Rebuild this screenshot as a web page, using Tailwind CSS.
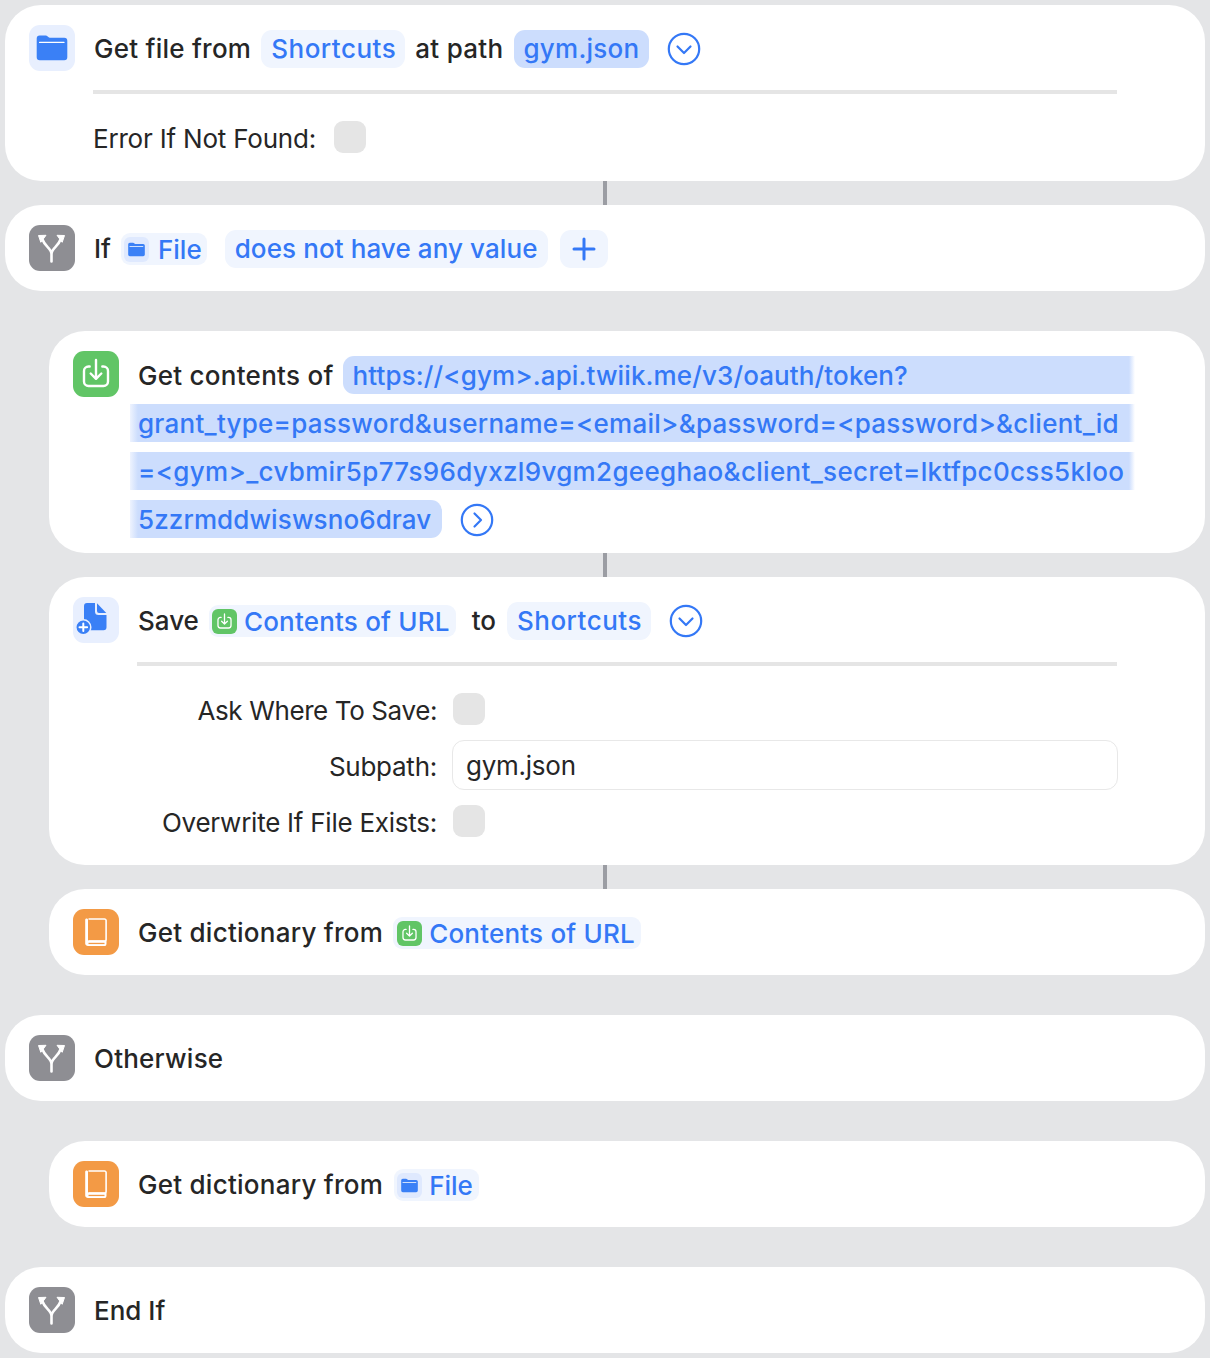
<!DOCTYPE html>
<html lang="en">

<head>
  <meta charset="UTF-8">
  <meta name="viewport" content="width=device-width, initial-scale=1.0">
  <title>Shortcut actions</title>
  <script src="https://cdn.jsdelivr.net/npm/@tailwindcss/browser@4"></script>
</head>

<body class="bg-[#e4e5e7] font-['Inter','Liberation_Sans',sans-serif] text-[26px] text-[#262626] leading-[32px] overflow-hidden">
  <!-- icon sprites -->
  <svg class="hidden">
    <symbol id="folder" viewBox="0 0 46 46">
      <path d="M7.700 13.500a3 3 0 0 1 3-3h6c1.500 0 2.500 2.200 4 2.200h14.600a3 3 0 0 1 3 3V32.300a3 3 0 0 1-3 3H10.700a3 3 0 0 1-3-3z" fill="#3a80f6" />
      <rect x="10" y="16.700" width="25.600" height="1.300" rx=".6" fill="#fff" />
    </symbol>
    <symbol id="branch" viewBox="0 0 46 46">
      <path d="M22.500 36.500V29C22.500 23 16 22 13.500 14.500M22.500 29C22.500 23 29 22 31.500 14.500" fill="none" stroke="#fff" stroke-width="2.600" stroke-linecap="round" />
      <path d="M9.500 10.500l7.500-.2-5.200 7zM35.500 10.500l-7.500-.2 5.200 7z" fill="#fff" stroke="#fff" stroke-width="1" stroke-linejoin="round" />
    </symbol>
    <symbol id="download" viewBox="0 0 46 46">
      <path d="M16.700 15.500H15.500a4.500 4.500 0 0 0-4.500 4.500v10.500a4.500 4.500 0 0 0 4.500 4.500h15a4.500 4.500 0 0 0 4.500-4.500V20a4.500 4.500 0 0 0-4.500-4.500h-1.200" fill="none" stroke="#fff" stroke-width="2.400" stroke-linecap="round" />
      <path d="M23 9v18.500M17.700 22.500l5.300 5.300 5.300-5.300" fill="none" stroke="#fff" stroke-width="2.400" stroke-linecap="round" stroke-linejoin="round" />
    </symbol>
    <symbol id="book" viewBox="0 0 46 46">
      <path d="M15.500 10H31.500a1.600 1.600 0 0 1 1.600 1.600V30.500a1.600 1.600 0 0 1-1.600 1.600H15.500" fill="none" stroke="#fff" stroke-width="1.600" />
      <path d="M13.500 9.500c1 0 1.500 .5 1.500 1.500v20.500h18.500v3c0 1-.5 2.500-1.500 2.500H15c-1.500 0-2.800-1-2.800-2.500V11c0-1 .5-1.500 1.300-1.500z" fill="#fff" />
      <path d="M15.500 33.800h16v1.300h-16z" fill="#f39a45" />
    </symbol>
    <symbol id="savefile" viewBox="0 0 46 46">
      <path d="M11 9a3 3 0 0 1 3-3h8v8.500a3.500 3.500 0 0 0 3.500 3.500h8v12.300a3 3 0 0 1-3 3H14a3 3 0 0 1-3-3z" fill="#3a80f6" />
      <path d="M24 6.300l9.300 9.700H26a2 2 0 0 1-2-2z" fill="#3a80f6" />
      <circle cx="10.300" cy="30.300" r="7.500" fill="#3a80f6" stroke="#e8effe" stroke-width="1.500" />
      <path d="M10.300 26.500v7.600M6.500 30.300h7.600" stroke="#fff" stroke-width="2" stroke-linecap="round" />
    </symbol>
  </svg>

  <main class="pt-[5px] pl-[5px] pr-[5px] flex flex-col">
    <!-- Get file -->
    <section class="bg-white rounded-[36px] pl-6 pr-[88px] pt-5 pb-7">
      <div class="flex items-center h-[46px]">
        <div class="w-[46px] h-[46px] rounded-[11px] bg-[#e8effe] shrink-0"><svg class="w-full h-full"><use href="#folder" /></svg></div>
        <span class="ml-[19px] pt-[2px] font-medium tracking-[0.25px]">Get file from</span>
        <span class="ml-[10px] mt-[2px] h-[38px] pl-[10px] pr-[9px] flex items-center rounded-[11px] bg-[#f0f5fe] text-[#3478f6] font-medium tracking-[0.5px]">Shortcuts</span>
        <span class="ml-[10px] pt-[2px] font-medium tracking-[0.3px]">at path</span>
        <span class="ml-[10px] mt-[2px] h-[38px] px-[10px] flex items-center rounded-[11px] bg-[#ccddfd] text-[#3478f6] font-medium tracking-[0.25px]">gym.json</span>
        <svg class="ml-[18px] mt-[2px] w-[34px] h-[34px]" viewBox="0 0 34 34" fill="none" stroke="#3478f6" stroke-width="2.200" stroke-linecap="round" stroke-linejoin="round"><circle cx="17" cy="17" r="15.200" /><path d="M10.500 14.500 17 21l6.500-6.500" /></svg>
      </div>
      <div class="ml-16 mt-[19px] h-1 bg-[#e5e5e5]"></div>
      <div class="ml-16 mt-[27px] flex items-center h-8">
        <span class="pt-[4px] tracking-[-0.2px]">Error If Not Found:</span>
        <span class="ml-[18px] w-8 h-8 rounded-[9px] bg-[#e5e5e5]"></span>
      </div>
    </section>
    <div class="w-1 h-6 bg-[#9b9da3] ml-[598px]"></div>

    <!-- If -->
    <section class="bg-white rounded-[36px] pl-6 pt-5 pb-5 h-[86px]">
      <div class="flex items-center h-[46px]">
        <div class="w-[46px] h-[46px] rounded-[11px] bg-[#8e8e93] shrink-0"><svg class="w-full h-full"><use href="#branch" /></svg></div>
        <span class="ml-[19px] pt-[2px] font-medium">If</span>
        <span class="ml-[10px] mt-[2px] h-8 pl-[3px] pr-[5px] flex items-center rounded-[9px] bg-[#f0f5fe] text-[#3478f6] font-medium">
          <span class="w-[25px] h-[25px] rounded-[6px] bg-[#dfe9fe]"><svg class="w-full h-full"><use href="#folder" /></svg></span>
          <span class="ml-[9px] relative top-px">File</span>
        </span>
        <span class="ml-[18px] mt-[2px] h-[38px] px-[10px] flex items-center rounded-[11px] bg-[#f0f5fe] text-[#3478f6] font-medium tracking-[0.1px]">does not have any value</span>
        <span class="ml-[12px] mt-[2px] w-12 h-[38px] flex items-center justify-center rounded-[11px] bg-[#f0f5fe]">
          <svg class="w-[24px] h-[24px]" viewBox="0 0 24 24" fill="none" stroke="#3478f6" stroke-width="3" stroke-linecap="round"><path d="M12 2v20M2 12h20" /></svg>
        </span>
      </div>
    </section>

    <!-- Get contents of URL -->
    <section class="mt-10 ml-11 bg-white rounded-[36px] pl-6 pr-[70px] pt-5 pb-[15px] flex items-start">
      <div class="w-[46px] h-[46px] rounded-[11px] bg-[#61c566] shrink-0"><svg class="w-full h-full"><use href="#download" /></svg></div>
      <div class="ml-[11px] mt-[5px] flex-1 flex flex-col gap-[10px] text-[#3478f6] font-medium">
        <div class="flex h-[38px] items-center pl-2">
          <span class="text-[#262626] pt-[2px] tracking-[0.27px]">Get contents of</span>
          <span class="ml-[9px] flex-1 h-[38px] pl-[10px] pt-[2px] tracking-[0.12px] flex items-center rounded-l-[11px] bg-[linear-gradient(90deg,#ccddfd,#ccddfd_calc(100%-6px),#ffffff)]">https://&lt;gym&gt;.api.twiik.me/v3/oauth/token?</span>
        </div>
        <div class="h-[38px] pl-2 pt-[2px] tracking-[0.26px] flex items-center bg-[linear-gradient(90deg,#eef3fe,#ccddfd_8px,#ccddfd_calc(100%-6px),#ffffff)]">grant_type=password&amp;username=&lt;email&gt;&amp;password=&lt;password&gt;&amp;client_id</div>
        <div class="h-[38px] pl-2 pt-[2px] tracking-[0.33px] flex items-center bg-[linear-gradient(90deg,#eef3fe,#ccddfd_8px,#ccddfd_calc(100%-6px),#ffffff)]">=&lt;gym&gt;_cvbmir5p77s96dyxzl9vgm2geeghao&amp;client_secret=lktfpc0css5kloo</div>
        <div class="flex items-center h-[38px]">
          <span class="h-[38px] pl-2 pr-[11px] pt-[2px] tracking-[0.1px] flex items-center rounded-r-[11px] bg-[linear-gradient(90deg,#eef3fe,#ccddfd_8px)]">5zzrmddwiswsno6drav</span>
          <svg class="ml-[18px] mt-[2px] w-[34px] h-[34px]" viewBox="0 0 34 34" fill="none" stroke="#3478f6" stroke-width="2.200" stroke-linecap="round" stroke-linejoin="round"><circle cx="17" cy="17" r="15.200" /><path d="M14.500 10.500 21 17l-6.500 6.500" /></svg>
        </div>
      </div>
    </section>
    <div class="w-1 h-6 bg-[#9b9da3] ml-[598px]"></div>

    <!-- Save file -->
    <section class="ml-11 bg-white rounded-[36px] pl-6 pr-[88px] pt-5 pb-7">
      <div class="flex items-center h-[46px]">
        <div class="w-[46px] h-[46px] rounded-[11px] bg-[#e8effe] shrink-0"><svg class="w-full h-full"><use href="#savefile" /></svg></div>
        <span class="ml-[19px] pt-[2px] font-medium">Save</span>
        <span class="ml-[10px] mt-[2px] h-8 pl-[3px] pr-[6px] flex items-center rounded-[9px] bg-[#f0f5fe] text-[#3478f6] font-medium tracking-[0.2px]">
          <span class="w-[25px] h-[25px] rounded-[6px] bg-[#61c566]"><svg class="w-full h-full"><use href="#download" /></svg></span>
          <span class="ml-[7px] relative top-px">Contents of URL</span>
        </span>
        <span class="ml-[16px] pt-[2px] font-medium">to</span>
        <span class="ml-[11px] mt-[2px] h-[38px] pl-[10px] pr-[9px] flex items-center rounded-[11px] bg-[#f0f5fe] text-[#3478f6] font-medium tracking-[0.5px]">Shortcuts</span>
        <svg class="ml-[18px] mt-[2px] w-[34px] h-[34px]" viewBox="0 0 34 34" fill="none" stroke="#3478f6" stroke-width="2.200" stroke-linecap="round" stroke-linejoin="round"><circle cx="17" cy="17" r="15.200" /><path d="M10.500 14.500 17 21l6.500-6.500" /></svg>
      </div>
      <div class="ml-16 mt-[19px] h-1 bg-[#e5e5e5]"></div>
      <div class="mt-[27px] grid grid-cols-[364px_1fr] gap-x-[16px] items-center tracking-[-0.25px]">
        <span class="text-right pt-[4px] leading-[24px] tracking-[-0.39px]">Ask Where To Save:</span>
        <span class="w-8 h-8 rounded-[9px] bg-[#e5e5e5]"></span>
        <span class="text-right mt-[15px] pt-[4px] leading-[24px]">Subpath:</span>
        <div class="mt-[15px] -ml-px -mr-px h-[50px] pl-[13px] pt-[2px] flex items-center rounded-[12px] border border-[#e8e8e8]">gym.json</div>
        <span class="text-right mt-[15px] pt-[4px] leading-[24px]">Overwrite If File Exists:</span>
        <span class="mt-[15px] w-8 h-8 rounded-[9px] bg-[#e5e5e5]"></span>
      </div>
    </section>
    <div class="w-1 h-6 bg-[#9b9da3] ml-[598px]"></div>

    <!-- Get dictionary -->
    <section class="ml-11 bg-white rounded-[36px] pl-6 pt-5 h-[86px]">
      <div class="flex items-center h-[46px]">
        <div class="w-[46px] h-[46px] rounded-[11px] bg-[#f39a45] shrink-0"><svg class="w-full h-full"><use href="#book" /></svg></div>
        <span class="ml-[19px] pt-[2px] font-medium tracking-[0.26px]">Get dictionary from</span>
        <span class="ml-[10px] mt-[2px] h-8 pl-[4px] pr-[6px] flex items-center rounded-[9px] bg-[#f0f5fe] text-[#3478f6] font-medium tracking-[0.2px]">
          <span class="w-[25px] h-[25px] rounded-[6px] bg-[#61c566]"><svg class="w-full h-full"><use href="#download" /></svg></span>
          <span class="ml-[7px] relative top-px">Contents of URL</span>
        </span>
      </div>
    </section>

    <!-- Otherwise -->
    <section class="mt-10 bg-white rounded-[36px] pl-6 pt-5 h-[86px]">
      <div class="flex items-center h-[46px]">
        <div class="w-[46px] h-[46px] rounded-[11px] bg-[#8e8e93] shrink-0"><svg class="w-full h-full"><use href="#branch" /></svg></div>
        <span class="ml-[19px] pt-[2px] font-medium tracking-[0.22px]">Otherwise</span>
      </div>
    </section>

    <section class="mt-10 ml-11 bg-white rounded-[36px] pl-6 pt-5 h-[86px]">
      <div class="flex items-center h-[46px]">
        <div class="w-[46px] h-[46px] rounded-[11px] bg-[#f39a45] shrink-0"><svg class="w-full h-full"><use href="#book" /></svg></div>
        <span class="ml-[19px] pt-[2px] font-medium tracking-[0.26px]">Get dictionary from</span>
        <span class="ml-[11px] mt-[2px] h-8 pl-[3px] pr-[6px] flex items-center rounded-[9px] bg-[#f0f5fe] text-[#3478f6] font-medium">
          <span class="w-[25px] h-[25px] rounded-[6px] bg-[#dfe9fe]"><svg class="w-full h-full"><use href="#folder" /></svg></span>
          <span class="ml-[7px] relative top-px">File</span>
        </span>
      </div>
    </section>

    <!-- End If -->
    <section class="mt-10 bg-white rounded-[36px] pl-6 pt-5 h-[86px]">
      <div class="flex items-center h-[46px]">
        <div class="w-[46px] h-[46px] rounded-[11px] bg-[#8e8e93] shrink-0"><svg class="w-full h-full"><use href="#branch" /></svg></div>
        <span class="ml-[19px] pt-[2px] font-medium">End If</span>
      </div>
    </section>
  </main>
</body>

</html>
